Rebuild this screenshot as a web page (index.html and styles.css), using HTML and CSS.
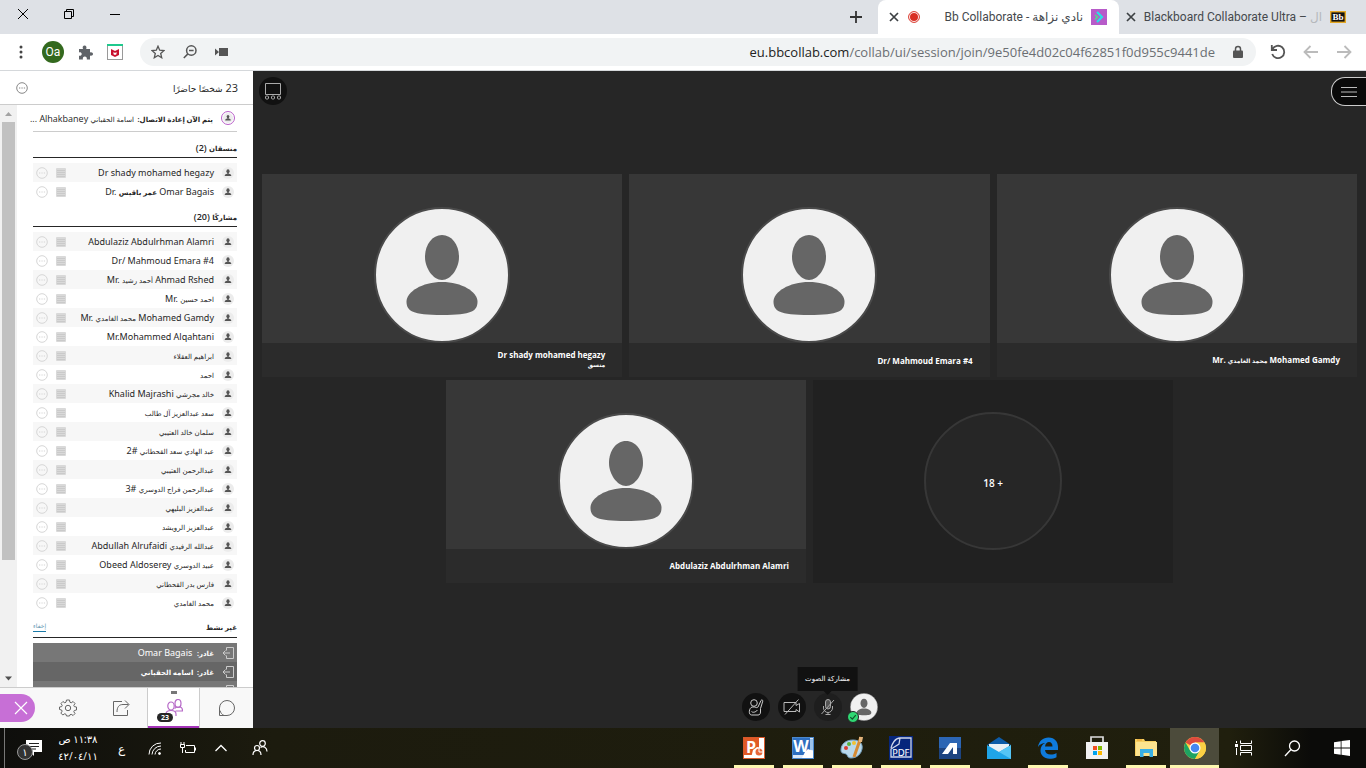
FILE: index.html
```
<!DOCTYPE html>
<html lang="ar" dir="rtl">
<head>
    <meta charset="UTF-8">
    <meta name="viewport" content="width=device-width, initial-scale=1.0">
    <title>Bb Collaborate - نادي نزاهة</title>
    <link rel="stylesheet" href="styles.css">
</head>
<body>

    <!-- Shared icons -->
    <svg class="sprite" aria-hidden="true">
        <symbol id="person" viewBox="0 0 12 12">
            <circle cx="6" cy="6" r="6" fill="#ececec"/>
            <ellipse cx="6" cy="4.3" rx="1.6" ry="2" fill="#555"/>
            <path d="M5.3 5.5h1.4v1.2c2 .2 2.6.9 2.6 2.3H2.7c0-1.4.6-2.1 2.6-2.3z" fill="#555"/>
        </symbol>
        <symbol id="list" viewBox="0 0 10 10">
            <rect width="10" height="10" rx="1" fill="#d9d9d9"/>
            <path d="M1 2.5h8M1 4.5h8M1 6.5h8M1 8.5h8" stroke="#c6c6c6" stroke-width=".8"/>
        </symbol>
        <symbol id="more" viewBox="0 0 12 12">
            <circle cx="6" cy="6" r="5.3" fill="none" stroke="currentColor" stroke-width="1"/>
            <path d="M3 6h1.3M5.4 6h1.3M7.800 6h1.3" stroke="currentColor" stroke-width="1.2"/>
        </symbol>
        <symbol id="leave" viewBox="0 0 12 12">
            <path d="M4.500 3.500v-3h7v11h-7v-3M8 6H1M3.500 3.500L1 6l2.500 2.500" fill="none" stroke="#ccc" stroke-width="1"/>
        </symbol>
        <symbol id="avatar" viewBox="0 0 136 136">
            <circle cx="68" cy="68" r="67" fill="#f0f0f0" stroke="#4a4a4a" stroke-width="2"/>
            <path d="M68 28c10 0 17 10 17 22 0 11-8 23-17 23S51 61 51 50c0-12 7-22 17-22z" fill="#666"/>
            <path d="M68 75c20 0 35.500 10 35.500 19.500S98 108 68 108s-35.500-4-35.500-13.500S48 75 68 75z" fill="#666"/>
        </symbol>
        <symbol id="close" viewBox="0 0 10 10">
            <path d="M1 1l8 8M9 1L1 9" stroke="currentColor" stroke-width="1.7"/>
        </symbol>
    </svg>

    <!-- Browser tabs -->
    <header class="tab-bar">
        <div class="tab tab-back">
            <svg class="favicon" viewBox="0 0 16 12"><rect x=".7" y=".7" width="14.600" height="10.600" fill="#111" stroke="#e5a823" stroke-width="1.4"/><text x="8" y="9.200" text-anchor="middle" fill="#fff">Bb</text></svg>
            <span class="tab-title" dir="ltr">Blackboard Collaborate Ultra – <span class="faded">ال</span></span>
            <button class="tab-close" aria-label="إغلاق"><svg width="10" height="10"><use href="#close"/></svg></button>
        </div>
        <div class="tab tab-active">
            <svg width="16" height="16" viewBox="0 0 16 16"><rect width="16" height="16" fill="#b75bc9"/><path d="M6 3l5 5-5 5" fill="none" stroke="#2be0e6" stroke-width="2.200"/><path d="M4 6l2.500 2L4 10.500" fill="none" stroke="#47e08c" stroke-width="1.600"/></svg>
            <span class="tab-title" dir="ltr">Bb Collaborate - نادي نزاهة</span>
            <svg class="record" width="12" height="12" viewBox="0 0 12 12"><circle cx="6" cy="6" r="5.400" fill="none" stroke="#d93025"/><circle cx="6" cy="6" r="4" fill="#d93025"/></svg>
            <button class="tab-close" aria-label="إغلاق"><svg width="10" height="10"><use href="#close"/></svg></button>
        </div>
        <button class="new-tab" aria-label="علامة تبويب جديدة"><svg width="12" height="12" viewBox="0 0 12 12"><path d="M6 0v12M0 6h12" stroke="#333" stroke-width="1.800"/></svg></button>
        <div class="window-controls">
            <button aria-label="تصغير"><svg width="10" height="12" viewBox="0 0 10 12"><path d="M0 6.500h10" stroke="#000"/></svg></button>
            <button aria-label="استعادة"><svg width="10" height="10" viewBox="0 0 10 10"><path d="M.5 2.500h7v7h-7zM2.500 2.500v-2h7v7h-2" fill="none" stroke="#000"/></svg></button>
            <button aria-label="إغلاق النافذة"><svg width="12" height="12" viewBox="0 0 12 12"><path d="M1 1l10 10M11 1L1 11" stroke="#000"/></svg></button>
        </div>
    </header>

    <!-- Address bar -->
    <div class="toolbar">
        <button aria-label="رجوع"><svg width="16" height="16" viewBox="0 0 16 16"><path d="M1 8h13M8.500 2l6 6-6 6" fill="none" stroke="#bbb" stroke-width="1.800"/></svg></button>
        <button aria-label="تقدم"><svg width="16" height="16" viewBox="0 0 16 16"><path d="M15 8H2M7.500 2l-6 6 6 6" fill="none" stroke="#bbb" stroke-width="1.800"/></svg></button>
        <button aria-label="إعادة تحميل"><svg width="16" height="16" viewBox="0 0 16 16"><path d="M2.500 5.200A6.200 6.200 0 1 1 2.200 10M1.800 1v5h5.200" fill="none" stroke="#555" stroke-width="1.800"/></svg></button>
        <div class="address">
            <svg width="10" height="14" viewBox="0 0 10 14"><path d="M2.500 6V4a2.500 2.500 0 0 1 5 0v2" fill="none" stroke="#555" stroke-width="1.500"/><rect x="0" y="5.500" width="10" height="7.500" rx="1" fill="#555"/></svg>
            <span class="url" dir="ltr"><b>eu.bbcollab.com</b>/collab/ui/session/join/9e50fe4d02c04f62851f0d955c9441de</span>
            <button aria-label="كاميرا"><svg width="14" height="10" viewBox="0 0 14 10"><path d="M4 1h9v8H4zM0 1.500l4 3.500-4 3.500z" fill="#555"/></svg></button>
            <button aria-label="تكبير"><svg width="14" height="14" viewBox="0 0 14 14"><circle cx="8.300" cy="5.500" r="4.700" fill="none" stroke="#555" stroke-width="1.500"/><path d="M6 5.500h4.600M4.900 8.900L.8 13" stroke="#555" stroke-width="1.500"/></svg></button>
            <button aria-label="إشارة مرجعية"><svg width="14" height="14" viewBox="0 0 14 14"><path d="M7 1.200l1.700 4 4.300.4-3.300 2.800 1 4.300L7 10.400l-3.700 2.300 1-4.300L1 5.600l4.300-.4z" fill="none" stroke="#555" stroke-width="1.300"/></svg></button>
        </div>
        <div class="extensions">
            <button aria-label="McAfee"><svg width="16" height="16" viewBox="0 0 16 16"><rect x=".5" y=".5" width="15" height="15" fill="#fff" stroke="#999"/><path d="M0 1h16" stroke="#1fc98d" stroke-width="2"/><path d="M4 5l4 2 4-2v6l-4 2-4-2z" fill="#c8102e"/><path d="M6.500 8v2.300l1.500.8 1.500-.8V8L8 9z" fill="#fff"/></svg></button>
            <button aria-label="الإضافات"><svg width="15" height="15" viewBox="0 0 15 15"><path d="M1 4h4c-.9-2 .1-3.500 1.600-3.500S9 2 8.200 4H12v3.500c1.500-.7 3 .2 3 1.500s-1.500 2.200-3 1.500V14.500H8.800c.4-1.800-.6-3-2-3s-2.300 1.200-1.900 3H1v-3.800c1.600.4 2.700-.5 2.700-1.700S2.600 7.100 1 7.400z" fill="#5f6368"/></svg></button>
            <button class="profile">Oa</button>
            <button aria-label="القائمة"><svg width="14" height="14" viewBox="0 0 14 14" fill="#444"><circle cx="7" cy="2" r="1.500"/><circle cx="7" cy="7" r="1.500"/><circle cx="7" cy="12" r="1.500"/></svg></button>
        </div>
    </div>

    <div class="session">
        <!-- Video stage -->
        <main class="stage">
            <button class="view-button" aria-label="طريقة العرض"><svg width="16" height="17" viewBox="0 0 16 17" fill="none" stroke="#aaa"><path d="M.5.500h15v11H.5z"/><rect x=".5" y="13" width="3" height="3" rx="1"/><rect x="6.500" y="13" width="3" height="3" rx="1"/><rect x="12.500" y="13" width="3" height="3" rx="1"/></svg></button>
            <button class="menu-button" aria-label="فتح القائمة"><svg width="16" height="10" viewBox="0 0 16 10"><path d="M0 .5h16M0 5h16M0 9.500h16" stroke="#bbb"/></svg></button>

            <div class="gallery">
                <figure class="tile">
                    <div class="tile-picture"><svg class="avatar"><use href="#avatar"/></svg></div>
                    <figcaption><span dir="auto">Dr shady mohamed hegazy</span><small>منسق</small></figcaption>
                </figure>
                <figure class="tile">
                    <div class="tile-picture"><svg class="avatar"><use href="#avatar"/></svg></div>
                    <figcaption><span dir="auto">Dr/ Mahmoud Emara #4</span></figcaption>
                </figure>
                <figure class="tile">
                    <div class="tile-picture"><svg class="avatar"><use href="#avatar"/></svg></div>
                    <figcaption><span dir="auto">Mr. <span class="ar">محمد الغامدي</span> Mohamed Gamdy</span></figcaption>
                </figure>
                <figure class="tile">
                    <div class="tile-picture"><svg class="avatar"><use href="#avatar"/></svg></div>
                    <figcaption><span dir="auto">Abdulaziz Abdulrhman Alamri</span></figcaption>
                </figure>
                <div class="tile tile-more"><span class="more-count">18 +</span></div>
            </div>

            <div class="controls">
                <button class="my-status" aria-label="حالتي">
                    <svg width="28" height="28"><use href="#avatar"/></svg>
                    <svg class="status-tick" width="12" height="12" viewBox="0 0 12 12"><circle cx="6" cy="6" r="5.500" fill="#2fd873" stroke="#222"/><path d="M3.300 6.200l2 2 3.500-4" fill="none" stroke="#14502c" stroke-width="1.200"/></svg>
                </button>
                <button class="mic-button" aria-describedby="mic-tip" aria-label="الصوت">
                    <svg width="16" height="16" viewBox="0 0 16 16" fill="none" stroke="#aaa"><rect x="5.500" y=".5" width="5" height="9.500" rx="2.500" fill="#555"/><path d="M3.500 7v2a4.500 4.500 0 0 0 9 0V7M8 13.500V15M5.500 15.500h5M1.500 15L14 1"/></svg>
                    <span class="tooltip" id="mic-tip" role="tooltip">مشاركة الصوت</span>
                </button>
                <button aria-label="الفيديو"><svg width="18" height="16" viewBox="0 0 18 16" fill="none" stroke="#bbb"><path d="M1 3.500h12v3L16.500 4.500v8.500l-3.500-2.500v2H1zM2 15.500L15.500.5"/></svg></button>
                <button aria-label="رفع اليد"><svg width="16" height="17" viewBox="0 0 16 17" fill="none" stroke="#ccc"><circle cx="6" cy="4" r="3.300"/><path d="M10 8l3-6.500c.5-1 2-.6 1.800.6L12.500 9.500V13c0 2-1 3-2.500 3H3.500C.5 16 .5 9.500 4 8h3c1.200.8 2.200.8 3 0M3.500 12.500c1 1.300 4 1 6-1.500"/></svg></button>
            </div>
        </main>

        <!-- Attendees panel -->
        <aside class="panel">
            <div class="panel-header">
                <h1>23 <span class="ar">شخصًا حاضرًا</span></h1>
                <button aria-label="خيارات"><svg width="12" height="12"><use href="#more"/></svg></button>
            </div>
            <div class="panel-body">
                <div class="people">
                    <div class="reconnecting">
                        <span class="ring"><svg width="10" height="10"><use href="#person"/></svg></span>
                        <span class="name"><span class="ar"><b>يتم الآن إعادة الاتصال:</b>&nbsp; اسامة الحقباني</span> Alhakbaney ...</span>
                    </div>

                    <h2><span><span class="ar">منسقان</span> (2)</span></h2>
                    <ul>
                        <li><svg class="who"><use href="#person"/></svg><span class="name" dir="auto">Dr shady mohamed hegazy</span><svg class="list-icon"><use href="#list"/></svg><button class="more" aria-label="المزيد"><svg><use href="#more"/></svg></button></li>
                        <li><svg class="who"><use href="#person"/></svg><span class="name" dir="auto">Dr. <b class="ar">عمر باقيس</b> Omar Bagais</span><svg class="list-icon"><use href="#list"/></svg><button class="more" aria-label="المزيد"><svg><use href="#more"/></svg></button></li>
                    </ul>

                    <h2><span><span class="ar">مشاركًا</span> (20)</span></h2>
                    <ul>
                        <li><svg class="who"><use href="#person"/></svg><span class="name" dir="auto">Abdulaziz Abdulrhman Alamri</span><svg class="list-icon"><use href="#list"/></svg><button class="more" aria-label="المزيد"><svg><use href="#more"/></svg></button></li>
                        <li><svg class="who"><use href="#person"/></svg><span class="name" dir="auto">Dr/ Mahmoud Emara #4</span><svg class="list-icon"><use href="#list"/></svg><button class="more" aria-label="المزيد"><svg><use href="#more"/></svg></button></li>
                        <li><svg class="who"><use href="#person"/></svg><span class="name" dir="auto">Mr. <span class="ar">أحمد رشيد</span> Ahmad Rshed</span><svg class="list-icon"><use href="#list"/></svg><button class="more" aria-label="المزيد"><svg><use href="#more"/></svg></button></li>
                        <li><svg class="who"><use href="#person"/></svg><span class="name" dir="auto">Mr. <span class="ar">احمد حسين</span></span><svg class="list-icon"><use href="#list"/></svg><button class="more" aria-label="المزيد"><svg><use href="#more"/></svg></button></li>
                        <li><svg class="who"><use href="#person"/></svg><span class="name" dir="auto">Mr. <span class="ar">محمد الغامدي</span> Mohamed Gamdy</span><svg class="list-icon"><use href="#list"/></svg><button class="more" aria-label="المزيد"><svg><use href="#more"/></svg></button></li>
                        <li><svg class="who"><use href="#person"/></svg><span class="name" dir="auto">Mr.Mohammed Alqahtani</span><svg class="list-icon"><use href="#list"/></svg><button class="more" aria-label="المزيد"><svg><use href="#more"/></svg></button></li>
                        <li><svg class="who"><use href="#person"/></svg><span class="name" dir="auto"><span class="ar">ابراهيم العقلاء</span></span><svg class="list-icon"><use href="#list"/></svg><button class="more" aria-label="المزيد"><svg><use href="#more"/></svg></button></li>
                        <li><svg class="who"><use href="#person"/></svg><span class="name" dir="auto"><span class="ar">احمد</span></span><svg class="list-icon"><use href="#list"/></svg><button class="more" aria-label="المزيد"><svg><use href="#more"/></svg></button></li>
                        <li><svg class="who"><use href="#person"/></svg><span class="name" dir="auto"><span class="ar">خالد مجرشي</span> Khalid Majrashi</span><svg class="list-icon"><use href="#list"/></svg><button class="more" aria-label="المزيد"><svg><use href="#more"/></svg></button></li>
                        <li><svg class="who"><use href="#person"/></svg><span class="name" dir="auto"><span class="ar">سعد عبدالعزيز آل طالب</span></span><svg class="list-icon"><use href="#list"/></svg><button class="more" aria-label="المزيد"><svg><use href="#more"/></svg></button></li>
                        <li><svg class="who"><use href="#person"/></svg><span class="name" dir="auto"><span class="ar">سلمان خالد العتيبي</span></span><svg class="list-icon"><use href="#list"/></svg><button class="more" aria-label="المزيد"><svg><use href="#more"/></svg></button></li>
                        <li><svg class="who"><use href="#person"/></svg><span class="name" dir="auto"><span class="ar">عبد الهادي سعد القحطاني</span> #2</span><svg class="list-icon"><use href="#list"/></svg><button class="more" aria-label="المزيد"><svg><use href="#more"/></svg></button></li>
                        <li><svg class="who"><use href="#person"/></svg><span class="name" dir="auto"><span class="ar">عبدالرحمن العتيبي</span></span><svg class="list-icon"><use href="#list"/></svg><button class="more" aria-label="المزيد"><svg><use href="#more"/></svg></button></li>
                        <li><svg class="who"><use href="#person"/></svg><span class="name" dir="auto"><span class="ar">عبدالرحمن فراج الدوسري</span> #3</span><svg class="list-icon"><use href="#list"/></svg><button class="more" aria-label="المزيد"><svg><use href="#more"/></svg></button></li>
                        <li><svg class="who"><use href="#person"/></svg><span class="name" dir="auto"><span class="ar">عبدالعزيز البليهي</span></span><svg class="list-icon"><use href="#list"/></svg><button class="more" aria-label="المزيد"><svg><use href="#more"/></svg></button></li>
                        <li><svg class="who"><use href="#person"/></svg><span class="name" dir="auto"><span class="ar">عبدالعزيز الرويشد</span></span><svg class="list-icon"><use href="#list"/></svg><button class="more" aria-label="المزيد"><svg><use href="#more"/></svg></button></li>
                        <li><svg class="who"><use href="#person"/></svg><span class="name" dir="auto"><span class="ar">عبدالله الرفيدي</span> Abdullah Alrufaidi</span><svg class="list-icon"><use href="#list"/></svg><button class="more" aria-label="المزيد"><svg><use href="#more"/></svg></button></li>
                        <li><svg class="who"><use href="#person"/></svg><span class="name" dir="auto"><span class="ar">عبيد الدوسري</span> Obeed Aldoserey</span><svg class="list-icon"><use href="#list"/></svg><button class="more" aria-label="المزيد"><svg><use href="#more"/></svg></button></li>
                        <li><svg class="who"><use href="#person"/></svg><span class="name" dir="auto"><span class="ar">فارس بدر القحطاني</span></span><svg class="list-icon"><use href="#list"/></svg><button class="more" aria-label="المزيد"><svg><use href="#more"/></svg></button></li>
                        <li><svg class="who"><use href="#person"/></svg><span class="name" dir="auto"><span class="ar">محمد الغامدي</span></span><svg class="list-icon"><use href="#list"/></svg><button class="more" aria-label="المزيد"><svg><use href="#more"/></svg></button></li>
                    </ul>

                    <h2><span class="ar">غير نشط</span><a href="#">إخفاء</a></h2>
                    <ul class="inactive">
                        <li><svg class="who"><use href="#leave"/></svg><span class="name"><b class="ar">غادر:</b>&nbsp; Omar Bagais</span></li>
                        <li><svg class="who"><use href="#leave"/></svg><span class="name"><b class="ar">غادر:&nbsp; اسامه الحقباني</b></span></li>
                        <li><svg class="who"><use href="#leave"/></svg></li>
                    </ul>
                </div>
                <div class="scrollbar" aria-hidden="true">
                    <svg width="17" height="17" viewBox="0 0 17 17"><path d="M5 11l3.500-4 3.500 4z" fill="#a3a3a3"/></svg>
                    <div class="scroll-thumb"></div>
                    <svg width="17" height="17" viewBox="0 0 17 17"><path d="M5 6.500l3.500 4 3.500-4z" fill="#505050"/></svg>
                </div>
            </div>
            <nav class="panel-tabs">
                <button aria-label="الدردشة"><svg width="18" height="18" viewBox="0 0 18 18" fill="none" stroke="#666"><path d="M1.500 16.500V9A7.500 7.500 0 1 1 9 16.500z"/><path d="M2 11.500c.7 2.500 2 4 4 5"/></svg></button>
                <button class="selected" aria-label="الحضور"><svg width="18" height="18" viewBox="0 0 18 18" fill="none" stroke="#b76bc8" stroke-width="1.200"><ellipse cx="6" cy="7" rx="3.200" ry="4"/><ellipse cx="13" cy="4.500" rx="3" ry="4"/><path d="M1 17v-2c0-2.500 2-3.500 5-3.500s5 1 5 3.500v2M9.500 9.500l2-1.500h3c2 0 3 1.200 3 4h-7"/></svg><span class="count">23</span></button>
                <button aria-label="مشاركة المحتوى"><svg width="18" height="18" viewBox="0 0 18 18" fill="none" stroke="#666"><path d="M10 2.500H1.500v14h14V11M5 13c0-5 2-7.500 6-7.500h5.500M13 1.500l4 4-4 4"/></svg></button>
                <button aria-label="إعداداتي"><svg width="18" height="18" viewBox="0 0 18 18" fill="none" stroke="#666"><circle cx="9" cy="9" r="2.700"/><path d="M7.500 1h3l.4 2.200 1.300.6L14.100 2.500l1.900 2-1.200 1.900.5 1.200 2.200.4v3l-2.200.5-.5 1.200 1.200 1.900-1.900 1.900-1.900-1.200-1.300.5L10.500 17h-3l-.5-1.700-1.300-.5-1.900 1.200-1.900-1.900 1.200-1.900-.5-1.200L.5 10.500V8l2.200-.4.5-1.200L2 4.500l1.900-2 1.900 1.300L7 3.200z"/></svg></button>
                <button class="panel-close" aria-label="إغلاق اللوحة"><svg width="14" height="14" viewBox="0 0 14 14"><path d="M1 1l12 12M13 1L1 13" stroke="#fff" stroke-width="1.200"/></svg></button>
            </nav>
        </aside>
    </div>

    <!-- Windows taskbar -->
    <footer class="taskbar">
        <div class="apps">
            <button aria-label="Start"><svg width="16" height="16" viewBox="0 0 16 16" fill="#fff"><path d="M0 2.200l6.700-1v6.400H0zM7.500 1.100L16 0v7.600H7.500zM0 8.400h6.700v6.400L0 13.800zM7.500 8.400H16V16l-8.500-1.200z"/></svg></button>
            <button aria-label="Search"><svg width="17" height="17" viewBox="0 0 17 17" fill="none" stroke="#fff" stroke-width="1.300"><circle cx="10.500" cy="6" r="5"/><path d="M7 9.500L1 16"/></svg></button>
            <button aria-label="Task View"><svg width="17" height="16" viewBox="0 0 17 16" fill="none" stroke="#fff"><path d="M5.500.500v3h11v-3M5.500 15.500v-3h11v3M5.500 5.500h11v5h-11zM1.500 1v2M1.500 8v7"/><path d="M0 5.500h3" stroke-width="3"/></svg></button>
            <button class="running current" aria-label="Chrome"><svg width="24" height="24" viewBox="0 0 24 24"><circle cx="12" cy="12" r="11" fill="#fbd044"/><path d="M12 12L2.500 6.500A11 11 0 0 1 21.500 6.500H12z" fill="#dd4b3e"/><path d="M2.500 6.500A11 11 0 0 0 12 23l4.800-8.300L12 12l-4.800 2.700z" fill="#1ea362"/><path d="M12 6.500h9.500A11 11 0 0 1 12 23l4.800-8.300z" fill="#fbd044"/><circle cx="12" cy="12" r="5.500" fill="#fff"/><circle cx="12" cy="12" r="4.300" fill="#4688f1"/></svg></button>
            <button class="running" aria-label="File Explorer"><svg width="22" height="20" viewBox="0 0 22 20"><path d="M0 1h9l1 2h11v15H0z" fill="#f7cf60"/><path d="M1 4h21v14H1z" fill="#fde48f"/><path d="M5 19V11h13v8h-3.500v-4h-6v4z" fill="#39b0e5"/><path d="M2 2h5" stroke="#e79b2b"/></svg></button>
            <button aria-label="Microsoft Store"><svg width="24" height="24" viewBox="0 0 24 24"><path d="M6 7V1h12v6" fill="none" stroke="#ddd" stroke-width="1.700"/><path d="M1 6h22v17H1z" fill="#f2f2f2"/><path d="M8 10h4v4H8z" fill="#f25022"/><path d="M13 10h4v4h-4z" fill="#7fba00"/><path d="M8 15h4v4H8z" fill="#00a4ef"/><path d="M13 15h4v4h-4z" fill="#ffb900"/></svg></button>
            <button class="running" aria-label="Edge"><svg width="22" height="22" viewBox="0 0 22 22"><path d="M1 10C2 4 6 .500 11.500.5 18 .500 21 5 21 10v3H8c.3 3 2.500 4.500 5.800 4.500 2 0 4-.5 5.700-1.500v4.200c-2 1-4.500 1.500-7 1.500C7 21.700 3.500 18 3.500 13.500c0-3.500 2-6.500 4.800-7.500C5.500 6 3 7 1 10zm7-.5h7.500C15.500 6.500 14 5 12 5S8.500 6.500 8 9.500z" fill="#0f7bdc"/></svg></button>
            <button aria-label="Mail"><svg width="24" height="24" viewBox="0 0 24 24"><path d="M0 9L12 1l12 8z" fill="#0d5ba8"/><path d="M2 8h20v8H2z" fill="#e9eff5"/><path d="M0 9l12 7 12-7v14H0z" fill="#1fa4e8"/><path d="M24 9v14L12 16z" fill="#55c5f6"/></svg></button>
            <button class="running" aria-label="Agent"><svg width="22" height="22" viewBox="0 0 22 22"><rect width="22" height="22" fill="#2c66b4"/><path d="M0 11h22v11H0z" fill="#1d4480"/><path d="M3 17L11 6h7v11h-4v-7l-5 7z" fill="#fff"/></svg></button>
            <button class="running" aria-label="PDF"><svg width="24" height="24" viewBox="0 0 24 24"><rect width="24" height="24" fill="#06267c"/><path d="M2 12C3 8 6 2 11 2l-1 6-8 5v8h20V2H11" fill="none" stroke="#cdd5ea" stroke-width="1.300"/><text class="pdf-text" x="12" y="20" text-anchor="middle" fill="#fff">PDF</text></svg></button>
            <button class="running" aria-label="Paint"><svg width="24" height="24" viewBox="0 0 24 24"><path d="M1 14C1 8 6 4 13 4s10 4 9 9-5 9-11 9c-4 0-3-3-5-4s-5 0-5-4z" fill="#b9d9ec" stroke="#78a5c4"/><circle cx="6" cy="12" r="2" fill="#db3e32"/><circle cx="9" cy="8" r="2" fill="#58b23c"/><circle cx="14" cy="7" r="2" fill="#f1c232"/><path d="M21 1L14 21" stroke="#d68b33" stroke-width="3"/><path d="M19 1h4l-1 5h-3z" fill="#e3b47c"/></svg></button>
            <button class="running" aria-label="Word"><svg width="22" height="22" viewBox="0 0 22 22"><rect x=".5" y=".5" width="21" height="21" fill="#dbe8f8" stroke="#4a88cd"/><path d="M15 2h6v11h-6z" fill="#9cc3ec"/><path d="M1 1h17v17H1z" fill="#2e6fc0"/><text class="office-letter" x="9" y="15" text-anchor="middle" fill="#fff">W</text><path d="M13 15l3-3 5 2v7H10z" fill="#fff"/></svg></button>
            <button class="running" aria-label="PowerPoint"><svg width="22" height="22" viewBox="0 0 22 22"><rect x=".5" y=".5" width="21" height="21" fill="#fff" stroke="#d8592a"/><path d="M1 1h15v17H1z" fill="#e05a26"/><text class="office-letter" x="8" y="16" text-anchor="middle" fill="#fff">P</text><path d="M10 13l4-3 7 1v10H8z" fill="#fff"/><circle cx="16" cy="15" r="3.500" fill="#e8673a"/><path d="M16 15v-4M16 15h4" stroke="#fff"/></svg></button>
        </div>
        <div class="tray">
            <button class="tray-people" aria-label="People"><svg width="16" height="16" viewBox="0 0 16 16" fill="none" stroke="#fff" stroke-width="1.200"><circle cx="10.500" cy="3.500" r="2.800"/><circle cx="5" cy="8" r="2.500"/><path d="M1 15c0-3 2-4.500 4-4.500S9 12 9 15M8.500 7.500c3-2 6.500 0 6.500 4"/></svg></button>
            <button aria-label="Show hidden icons"><svg width="12" height="8" viewBox="0 0 12 8"><path d="M.5 7L6 1.500 11.500 7" fill="none" stroke="#fff" stroke-width="1.300"/></svg></button>
            <button aria-label="Battery"><svg width="16" height="14" viewBox="0 0 16 14" fill="none" stroke="#fff"><path d="M6 4.500h8.500v7h-9V9M15.500 6.500v3M1 1v3M4 1v3M.5 3.500h4v3h-4zM2.500 7v5"/></svg></button>
            <button aria-label="Wi-Fi"><svg width="14" height="13" viewBox="0 0 14 13" fill="none" stroke="#fff"><path d="M1 12.500A11.500 11.500 0 0 1 13 1M4 12.500A9 9 0 0 1 13 4M7 12.500A6 6 0 0 1 13 7"/><circle cx="11.500" cy="11.500" r="1" fill="#fff"/></svg></button>
            <span class="language">ع</span>
            <div class="clock"><span>١١:٣٨ ص</span><span>٤٢/٠٤/١١</span></div>
            <button class="notifications" aria-label="Notifications"><svg width="16" height="16" viewBox="0 0 16 16"><path d="M0 0h16v12H8v4l-4-4H0z" fill="#fff"/><path d="M3 3.500h10M3 6.500h10M3 9h7" stroke="#222"/></svg><span class="notice-count">١</span></button>
        </div>
    </footer>

</body>
</html>
```
FILE: styles.css
```
/* General */
* {
    box-sizing: border-box;
}

body {
    margin: 0;
    height: 100vh;
    display: flex;
    flex-direction: column;
    overflow: hidden;
    font-family: "Open Sans", "DejaVu Sans", sans-serif;
    font-size: 9px;
    color: #262626;
    background-color: #fff;
}

button {
    display: flex;
    align-items: center;
    justify-content: center;
    padding: 0;
    border: none;
    background: none;
    color: inherit;
    font-family: inherit;
    cursor: pointer;
}

svg {
    display: block;
    flex: none;
}

.sprite {
    position: absolute;
    width: 0;
    height: 0;
}

/* Arabic glyphs run wider than the Latin ones at the same size */
.ar {
    font-size: 7px;
}

/* Browser tabs */
.tab-bar {
    display: flex;
    flex: none;
    height: 34px;
    background-color: #dee1e6;
}

.tab {
    display: flex;
    align-items: center;
    gap: 8px;
    font-family: Roboto, "DejaVu Sans", sans-serif;
    font-size: 12px;
    color: #45494d;
}

.tab-back {
    width: 247px;
    padding-right: 20px;
    padding-left: 9px;
}

.tab-active {
    width: 241px;
    padding-right: 12px;
    padding-left: 10px;
    background-color: #fff;
    border-radius: 8px 8px 0 0;
}

.tab-title {
    flex: 1;
    text-align: right;
    white-space: nowrap;
}

.favicon {
    width: 16px;
    height: 12px;
    font: bold 9px "Liberation Serif", serif;
}

.faded {
    color: #b5b8bc;
}

.tab-close {
    width: 12px;
    color: #3c4043;
}

.new-tab {
    width: 44px;
}

.window-controls {
    display: flex;
    margin-right: auto;
    padding-bottom: 6px;
}

.window-controls button {
    width: 46px;
}

/* Address bar */
.toolbar {
    display: flex;
    flex: none;
    align-items: center;
    gap: 17px;
    height: 37px;
    padding: 0 14px;
    border-bottom: 1px solid #d5d8db;
}

.address {
    display: flex;
    flex: 1;
    align-items: center;
    gap: 18px;
    height: 28px;
    margin-right: -3px;
    padding: 0 13px 0 11px;
    border-radius: 14px;
    background-color: #f1f3f4;
}

.url {
    flex: 1;
    text-align: right;
    font-size: 13px;
    color: #6b6f73;
}

.url b {
    font-weight: normal;
    color: #222;
}

.extensions {
    display: flex;
    align-items: center;
    gap: 14px;
}

.profile {
    width: 22px;
    height: 22px;
    border-radius: 50%;
    background-color: #33691e;
    color: #fff;
    font-family: Roboto, sans-serif;
    font-size: 12px;
}

/* Session */
.session {
    display: flex;
    flex: 1;
    min-height: 0;
}

.stage {
    position: relative;
    display: flex;
    flex: 1;
    flex-direction: column;
    min-width: 0;
    background-color: #262626;
}

.view-button {
    position: absolute;
    top: 6px;
    left: 6px;
    width: 28px;
    height: 28px;
    border-radius: 50%;
    background-color: #111;
}

.menu-button {
    position: absolute;
    top: 6px;
    right: 0;
    width: 35px;
    height: 29px;
    border: 1px solid #ccc;
    border-right: none;
    border-radius: 14px 0 0 14px;
    background-color: #0a0a0a;
}

/* Video tiles */
.gallery {
    direction: ltr;
    display: flex;
    flex: 1;
    flex-wrap: wrap;
    align-content: center;
    justify-content: center;
    gap: 3px 7px;
    padding: 0 9px;
}

.tile {
    display: flex;
    flex-direction: column;
    width: calc((100% - 14px) / 3);
    aspect-ratio: 16 / 9;
    margin: 0;
    background-color: #373737;
}

.tile-picture {
    display: flex;
    flex: 1;
    align-items: flex-end;
    justify-content: center;
}

.avatar {
    width: 136px;
    height: 136px;
}

.tile figcaption {
    direction: rtl;
    display: flex;
    flex-direction: column;
    justify-content: center;
    height: 34px;
    padding: 0 17px;
    background-color: #2b2b2b;
    color: #fff;
    font-size: 8px;
    font-weight: bold;
    line-height: 11px;
    text-align: right;
}

.tile figcaption span,
.panel .name {
    text-align: right;
}

.tile figcaption small,
.tile figcaption .ar {
    font-size: 6px;
}

.tile-more {
    align-items: center;
    justify-content: center;
    background-color: #212121;
}

.more-count {
    display: flex;
    align-items: center;
    justify-content: center;
    width: 138px;
    height: 138px;
    padding-top: 3px;
    border: 2px solid #373737;
    border-radius: 50%;
    background-color: #262626;
    color: #fff;
    font-size: 10px;
    font-weight: 600;
}

/* Stage controls */
.controls {
    display: flex;
    justify-content: center;
    gap: 8px;
    padding: 7px;
}

.controls button {
    position: relative;
    width: 28px;
    height: 28px;
    border-radius: 50%;
    background-color: #111;
}

.controls .mic-button {
    background-color: #1e1e1e;
}

.status-tick {
    position: absolute;
    bottom: -2px;
    left: -3px;
}

.tooltip {
    position: absolute;
    bottom: 30px;
    left: 50%;
    transform: translateX(-50%);
    padding: 0 8px;
    background-color: #111;
    color: #fff;
    font-size: 7px;
    line-height: 24px;
    white-space: nowrap;
}

.tooltip::after {
    content: "";
    position: absolute;
    top: 100%;
    left: 50%;
    transform: translateX(-50%);
    border: 4px solid transparent;
    border-top-color: #111;
    border-bottom: none;
}

/* Attendees panel */
.panel {
    display: flex;
    flex: none;
    flex-direction: column;
    width: 253px;
}

.panel-header {
    display: flex;
    align-items: center;
    justify-content: space-between;
    height: 34px;
    padding: 0 15px 0 16px;
    border-bottom: 1px solid #ccc;
    color: #888;
}

.panel-header h1 {
    margin: 0;
    color: #262626;
    font-size: 11px;
    font-weight: normal;
}

.panel-header .ar {
    font-size: 9px;
}

.panel-body {
    display: flex;
    flex: 1;
    min-height: 0;
    overflow: hidden;
}

.people {
    flex: 1;
    min-width: 0;
    padding: 0 16px;
}

.reconnecting {
    display: flex;
    align-items: center;
    gap: 8px;
    height: 27px;
    padding-right: 2px;
    border-bottom: 1px solid #ccc;
}

.ring {
    padding: 1px;
    border: 1px solid #b95fc9;
    border-radius: 50%;
}

.people h2 {
    display: flex;
    align-items: center;
    justify-content: space-between;
    height: 26px;
    margin: 0 0 5px;
    padding-top: 5px;
    border-bottom: 1px solid #262626;
    font-size: 9px;
    font-weight: 600;
}

.people h2 .ar {
    font-size: 7px;
    font-weight: bold;
}

.people h2 a {
    border-bottom: 1px solid #1b7aa8;
    color: #5b93ae;
    font-size: 6px;
    font-weight: normal;
    line-height: 9px;
    text-decoration: none;
}

.people ul {
    margin: 0;
    padding: 0;
    list-style: none;
}

.people li {
    display: flex;
    align-items: center;
    gap: 8px;
    height: 19px;
    padding: 0 3px;
}

.people li:nth-child(odd) {
    background-color: #f7f7f7;
}

.people .name {
    flex: 1;
    white-space: nowrap;
}

.people li .name {
    font-family: "Noto Sans", "DejaVu Sans", sans-serif;
}

.who {
    width: 12px;
    height: 12px;
}

.list-icon {
    width: 10px;
    height: 10px;
}

.more,
.more svg {
    width: 12px;
    height: 12px;
    color: #d6d6d6;
}

.people .inactive li {
    background-color: #666;
    color: #fff;
}

.people .inactive li:nth-child(odd) {
    background-color: #777;
}

.scrollbar {
    display: flex;
    flex-direction: column;
    justify-content: space-between;
    width: 17px;
    background-color: #f1f1f1;
}

.scroll-thumb {
    flex: 0 0 438px;
    margin: 0 2px auto;
    background-color: #c1c1c1;
}

/* Panel bottom tabs */
.panel-tabs {
    display: flex;
    flex: none;
    align-items: center;
    height: 41px;
    border-top: 1px solid #ccc;
    background-color: #f8f8f8;
}

.panel-tabs button {
    position: relative;
    width: 53px;
    height: 40px;
}

.panel-tabs .selected {
    border: solid #ccc;
    border-width: 0 1px;
    background-color: #fff;
    box-shadow: inset 0 -2px #a434b8;
}

.selected::before {
    content: "";
    position: absolute;
    top: 3px;
    width: 6px;
    height: 3px;
    background-color: #777;
}

.count {
    position: absolute;
    bottom: 6px;
    left: 9px;
    padding: 0 4px;
    border-radius: 5px;
    background-color: #262626;
    color: #fff;
    font-size: 7px;
    font-weight: bold;
    line-height: 9px;
}

.panel-tabs .panel-close {
    width: 35px;
    height: 28px;
    margin-right: auto;
    padding-left: 6px;
    border-radius: 0 14px 14px 0;
    background-color: #c76fd6;
}

/* Taskbar */
.taskbar {
    display: flex;
    flex: none;
    justify-content: space-between;
    height: 40px;
    background: linear-gradient(to right, #0e0e0c, #1c1b0e 20%, #201f0d 90%, #0b0b09 96%);
    color: #fff;
}

.apps {
    display: flex;
}

.apps button {
    width: 49px;
    border-bottom: 3px solid transparent;
    padding-top: 3px;
}

.apps .running {
    background: linear-gradient(#fdf8b0, #fdf8b0) center bottom / 40px 3px no-repeat border-box;
}

.apps .current {
    background-color: #4c4b3b;
    background-size: 49px 3px;
}

.office-letter {
    font: bold 16px "Open Sans", sans-serif;
}

.pdf-text {
    font: 9px "DejaVu Sans", sans-serif;
}

.tray {
    display: flex;
    align-items: center;
    margin-left: 4px;
    padding-left: 3px;
    border-left: 1px solid #777;
}

.tray button,
.language {
    width: 33px;
    text-align: center;
}

.tray .tray-people {
    width: 45px;
}

.language {
    font-size: 12px;
}

.clock {
    display: flex;
    flex-direction: column;
    width: 54px;
    font-size: 10px;
    line-height: 17px;
    text-align: center;
}

.tray .notifications {
    position: relative;
    width: 43px;
    padding-left: 8px;
}

.notice-count {
    position: absolute;
    top: 4px;
    left: 9px;
    width: 16px;
    height: 16px;
    border: 1px solid #999;
    border-radius: 50%;
    background-color: #333;
    font-size: 10px;
    line-height: 14px;
}
```
